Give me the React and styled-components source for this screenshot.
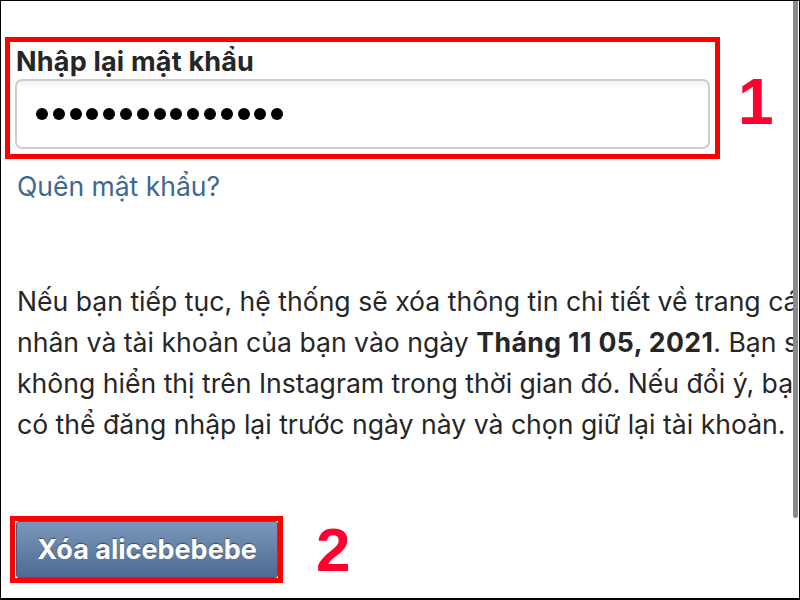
import React from 'react';
import styled, { createGlobalStyle } from 'styled-components';

const GlobalStyle = createGlobalStyle`
    html, body {
        margin: 0;
        padding: 0;
        background: #fff;
    }
    body {
        font-family: Inter, "Noto Sans", "DejaVu Sans", sans-serif;
    }
`;

const paragraphLines = [
    [{ text: 'Nếu bạn tiếp tục, hệ thống sẽ xóa thông tin chi tiết về trang cá' }],
    [
        { text: 'nhân và tài khoản của bạn vào ngày ' },
        { text: 'Tháng 11 05, 2021', bold: true },
        { text: '. Bạn sẽ' },
    ],
    [{ text: 'không hiển thị trên Instagram trong thời gian đó. Nếu đổi ý, bạn' }],
    [{ text: 'có thể đăng nhập lại trước ngày này và chọn giữ lại tài khoản.' }],
];

const App = () => {
    return (
        <>
            <GlobalStyle />
            <Frame>
                <Content>
                    <StepRow>
                        <Highlight>
                            <Label>Nhập lại mật khẩu</Label>
                            <PasswordField>
                                {Array.from({ length: 15 }).map((_, i) => (
                                    <Dot key={i} />
                                ))}
                            </PasswordField>
                        </Highlight>
                        <StepNumber>1</StepNumber>
                    </StepRow>

                    <ForgotLink>Quên mật khẩu?</ForgotLink>

                    <Paragraph>
                        {paragraphLines.map((line, i) => (
                            <Line key={i}>
                                {line.map((part, j) =>
                                    part.bold ? <b key={j}>{part.text}</b> : <span key={j}>{part.text}</span>
                                )}
                            </Line>
                        ))}
                    </Paragraph>

                    <StepRow $second>
                        <Highlight $tight>
                            <DeleteButton>Xóa alicebebebe</DeleteButton>
                        </Highlight>
                        <StepNumber $second>2</StepNumber>
                    </StepRow>
                </Content>
                <Scrollbar />
            </Frame>
        </>
    );
};

const Frame = styled.div`
    position: relative;
    width: 800px;
    height: 600px;
    box-sizing: border-box;
    border: 1px solid #000;
    border-bottom-width: 2px;
    overflow: hidden;
    background: #fff;
`;

// the text runs past the right edge in the screenshot, so clip it
const Content = styled.div`
    width: 792px;
    height: 100%;
    overflow: hidden;
    padding: 36px 0 0 4px;
    box-sizing: border-box;
`;

const StepRow = styled.div`
    display: flex;
    align-items: center;
    gap: ${p => (p.$second ? '33px' : '18px')};
    margin: ${p => (p.$second ? '71px 0 0 5px' : '0')};
`;

const Highlight = styled.div`
    border: 5px solid #ff0000;
    padding: ${p => (p.$tight ? '0 0 0 1px' : '5px')};
    width: ${p => (p.$tight ? 'auto' : '695px')};
    box-sizing: content-box;
    display: flex;
    flex-direction: column;
`;

const Label = styled.div`
    font-size: 27px;
    font-weight: 700;
    letter-spacing: 0.2px;
    color: #262626;
    line-height: 30px;
    padding-left: 1px;
    height: 32px;
`;

const PasswordField = styled.div`
    height: 66px;
    border: 2px solid #cdcdcd;
    border-radius: 7px;
    background: linear-gradient(#f1f1f1 0, #fff 8px, #fff 100%);
    display: flex;
    align-items: center;
    gap: 4.8px;
    padding-left: 19px;
`;

const Dot = styled.span`
    width: 12px;
    height: 12px;
    border-radius: 50%;
    background: #000;
`;

const StepNumber = styled.div`
    font-family: "Liberation Sans", Arial, sans-serif;
    font-weight: 700;
    font-size: ${p => (p.$second ? '62px' : '64px')};
    line-height: 1;
    color: #ff0030;
    margin-top: ${p => (p.$second ? '0' : '8px')};
`;

const ForgotLink = styled.div`
    margin: 11px 0 0 12px;
    font-size: 26.5px;
    line-height: 32px;
    color: #3c6893;
`;

const Paragraph = styled.div`
    margin: 79px 0 0 12px;
    font-size: 26.6px;
    line-height: 41px;
    color: #262626;
    b {
        font-weight: 700;
        letter-spacing: 0.4px;
    }
`;

const Line = styled.div`
    white-space: nowrap;
`;

const DeleteButton = styled.div`
    width: 262px;
    height: 57px;
    box-sizing: border-box;
    border: 1px solid #3f5b82;
    border-radius: 3px;
    background: linear-gradient(#7b98bb, #4d6b93);
    color: #fff;
    font-size: 27px;
    font-weight: 700;
    line-height: 55px;
    text-align: center;
    text-shadow: 0 -1px 1px rgba(0, 0, 0, 0.45);
`;

const Scrollbar = styled.div`
    position: absolute;
    top: 0;
    right: 1px;
    width: 5px;
    height: 517px;
    background: #8a8a8a;
    border-radius: 0 0 3px 3px;
`;

export default App;
